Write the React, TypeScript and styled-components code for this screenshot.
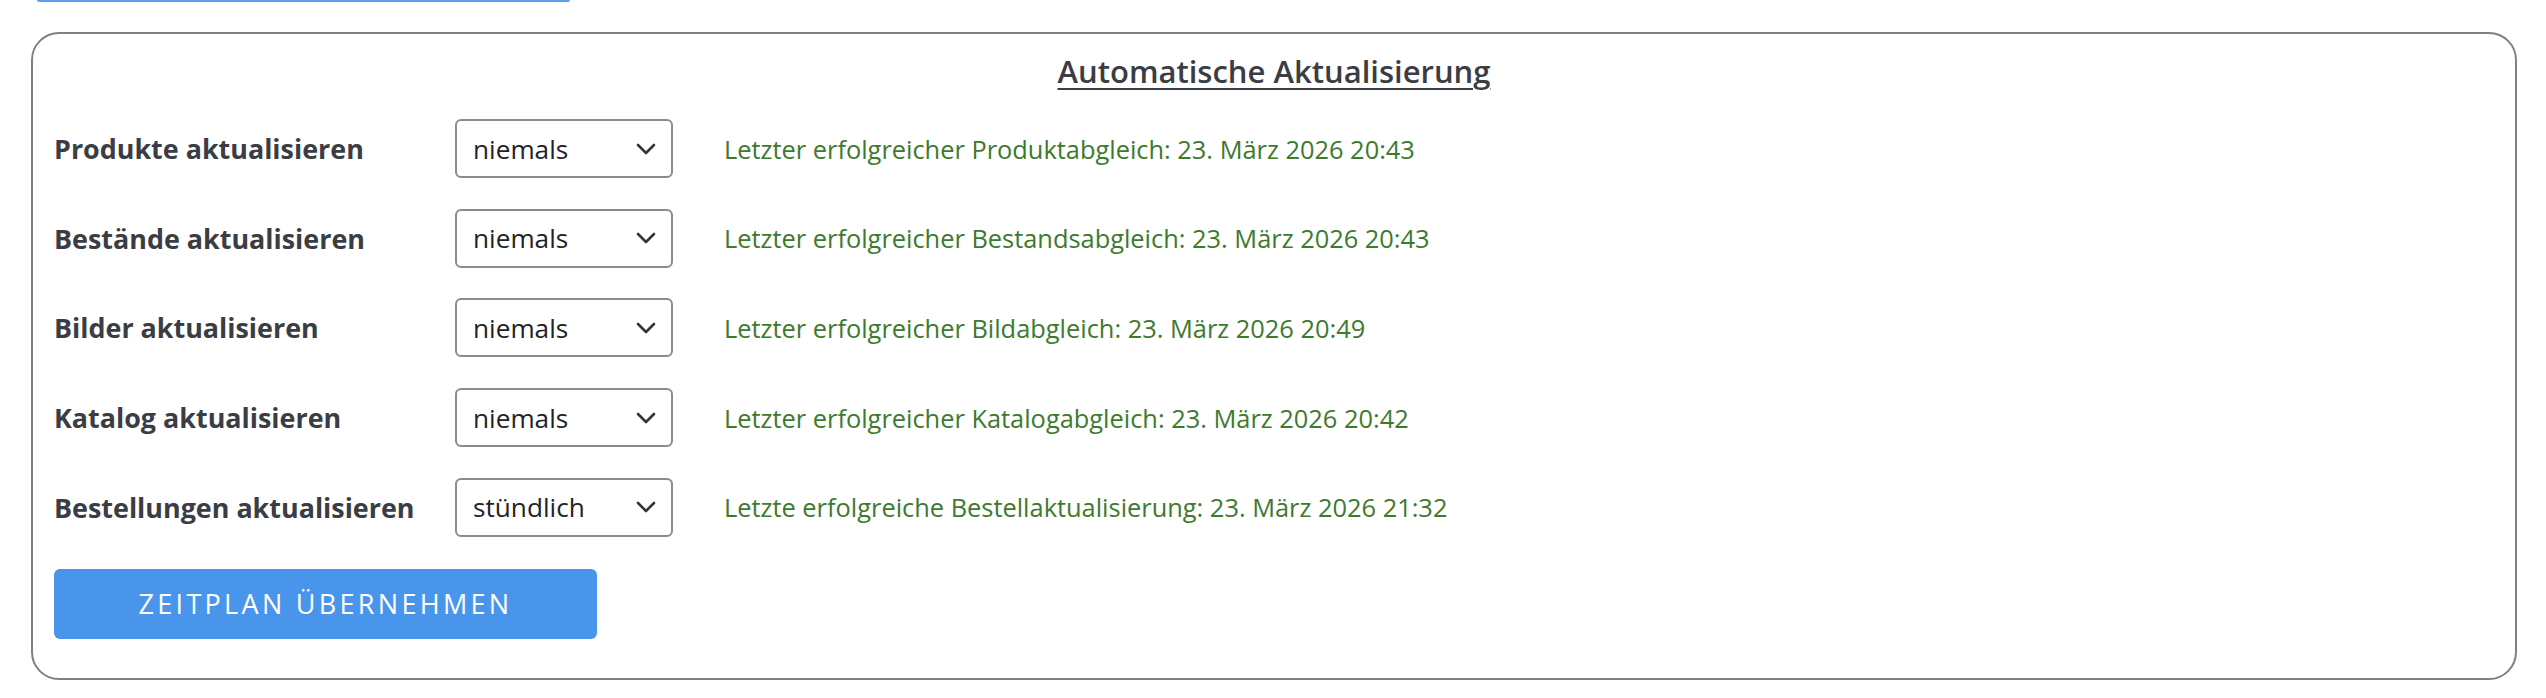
import React from 'react';
import styled, { createGlobalStyle } from 'styled-components';

const GlobalStyle = createGlobalStyle`
  html, body {
    margin: 0;
    padding: 0;
    background: #ffffff;
  }
  body {
    font-family: 'Open Sans', 'Lato', sans-serif;
    color: #3a3d44;
  }
`;

type Schedule = {
  label: string;
  value: string;
  status: string;
};

const schedules: Schedule[] = [
  {
    label: 'Produkte aktualisieren',
    value: 'niemals',
    status: 'Letzter erfolgreicher Produktabgleich: 23. März 2026 20:43',
  },
  {
    label: 'Bestände aktualisieren',
    value: 'niemals',
    status: 'Letzter erfolgreicher Bestandsabgleich: 23. März 2026 20:43',
  },
  {
    label: 'Bilder aktualisieren',
    value: 'niemals',
    status: 'Letzter erfolgreicher Bildabgleich: 23. März 2026 20:49',
  },
  {
    label: 'Katalog aktualisieren',
    value: 'niemals',
    status: 'Letzter erfolgreicher Katalogabgleich: 23. März 2026 20:42',
  },
  {
    label: 'Bestellungen aktualisieren',
    value: 'stündlich',
    status: 'Letzte erfolgreiche Bestellaktualisierung: 23. März 2026 21:32',
  },
];

const Chevron = () => (
  <svg width="20" height="12" viewBox="0 0 20 12" fill="none">
    <path d="M2 2 L10 10 L18 2" stroke="#33353a" strokeWidth="2.6" strokeLinecap="round" strokeLinejoin="round" />
  </svg>
);

const App = () => {
  return (
    <Page>
      <GlobalStyle />
      <TopEdge />
      <Panel>
        <Title>Automatische Aktualisierung</Title>
        <Rows>
          {schedules.map((s) => (
            <Row key={s.label}>
              <Label>{s.label}</Label>
              <Select>
                <SelectValue>{s.value}</SelectValue>
                <Chevron />
              </Select>
              <Status>{s.status}</Status>
            </Row>
          ))}
        </Rows>
        <ApplyButton>Zeitplan übernehmen</ApplyButton>
      </Panel>
    </Page>
  );
};

export default App;

const Page = styled.div`
  width: 2546px;
  height: 698px;
  overflow: hidden;
  box-sizing: border-box;
`;

const TopEdge = styled.div`
  width: 533px;
  height: 2px;
  margin-left: 37px;
  background: #5aa0f0;
  border-radius: 0 0 3px 3px;
`;

const Panel = styled.div`
  box-sizing: border-box;
  width: 2486px;
  height: 648px;
  margin: 30px 0 0 31px;
  border: 2px solid #808080;
  border-radius: 28px;
  padding: 15px 21px 0 21px;
  display: flex;
  flex-direction: column;
`;

const Title = styled.div`
  height: 44px;
  line-height: 44px;
  text-align: center;
  font-size: 31px;
  font-weight: 600;
  text-decoration: underline;
  text-underline-offset: 5px;
  text-decoration-thickness: 2px;
  color: #3a3d44;
`;

const Rows = styled.div`
  margin-top: 26px;
  display: flex;
  flex-direction: column;
  gap: 30.7px;
`;

const Row = styled.div`
  display: grid;
  grid-template-columns: 401px 218px 1fr;
  align-items: center;
  height: 59px;
`;

const Label = styled.div`
  font-size: 26.9px;
  font-weight: 700;
  color: #3a3d44;
  white-space: nowrap;
`;

const Select = styled.div`
  box-sizing: border-box;
  height: 59px;
  border: 2px solid #8c8c90;
  border-radius: 6px;
  padding: 0 15px 0 16px;
  display: flex;
  align-items: center;
  justify-content: space-between;
  background: #ffffff;
`;

const SelectValue = styled.span`
  font-size: 26.2px;
  color: #222326;
`;

const Status = styled.div`
  padding-left: 51px;
  font-size: 25.4px;
  color: #3d7a2e;
  white-space: nowrap;
`;

const ApplyButton = styled.button`
  margin-top: 32px;
  width: 543px;
  height: 70px;
  border: none;
  border-radius: 6px;
  background: #4a95ec;
  color: #ffffff;
  font-family: 'Open Sans', 'Lato', sans-serif;
  font-size: 27px;
  letter-spacing: 3.3px;
  text-transform: uppercase;
  cursor: pointer;
`;
